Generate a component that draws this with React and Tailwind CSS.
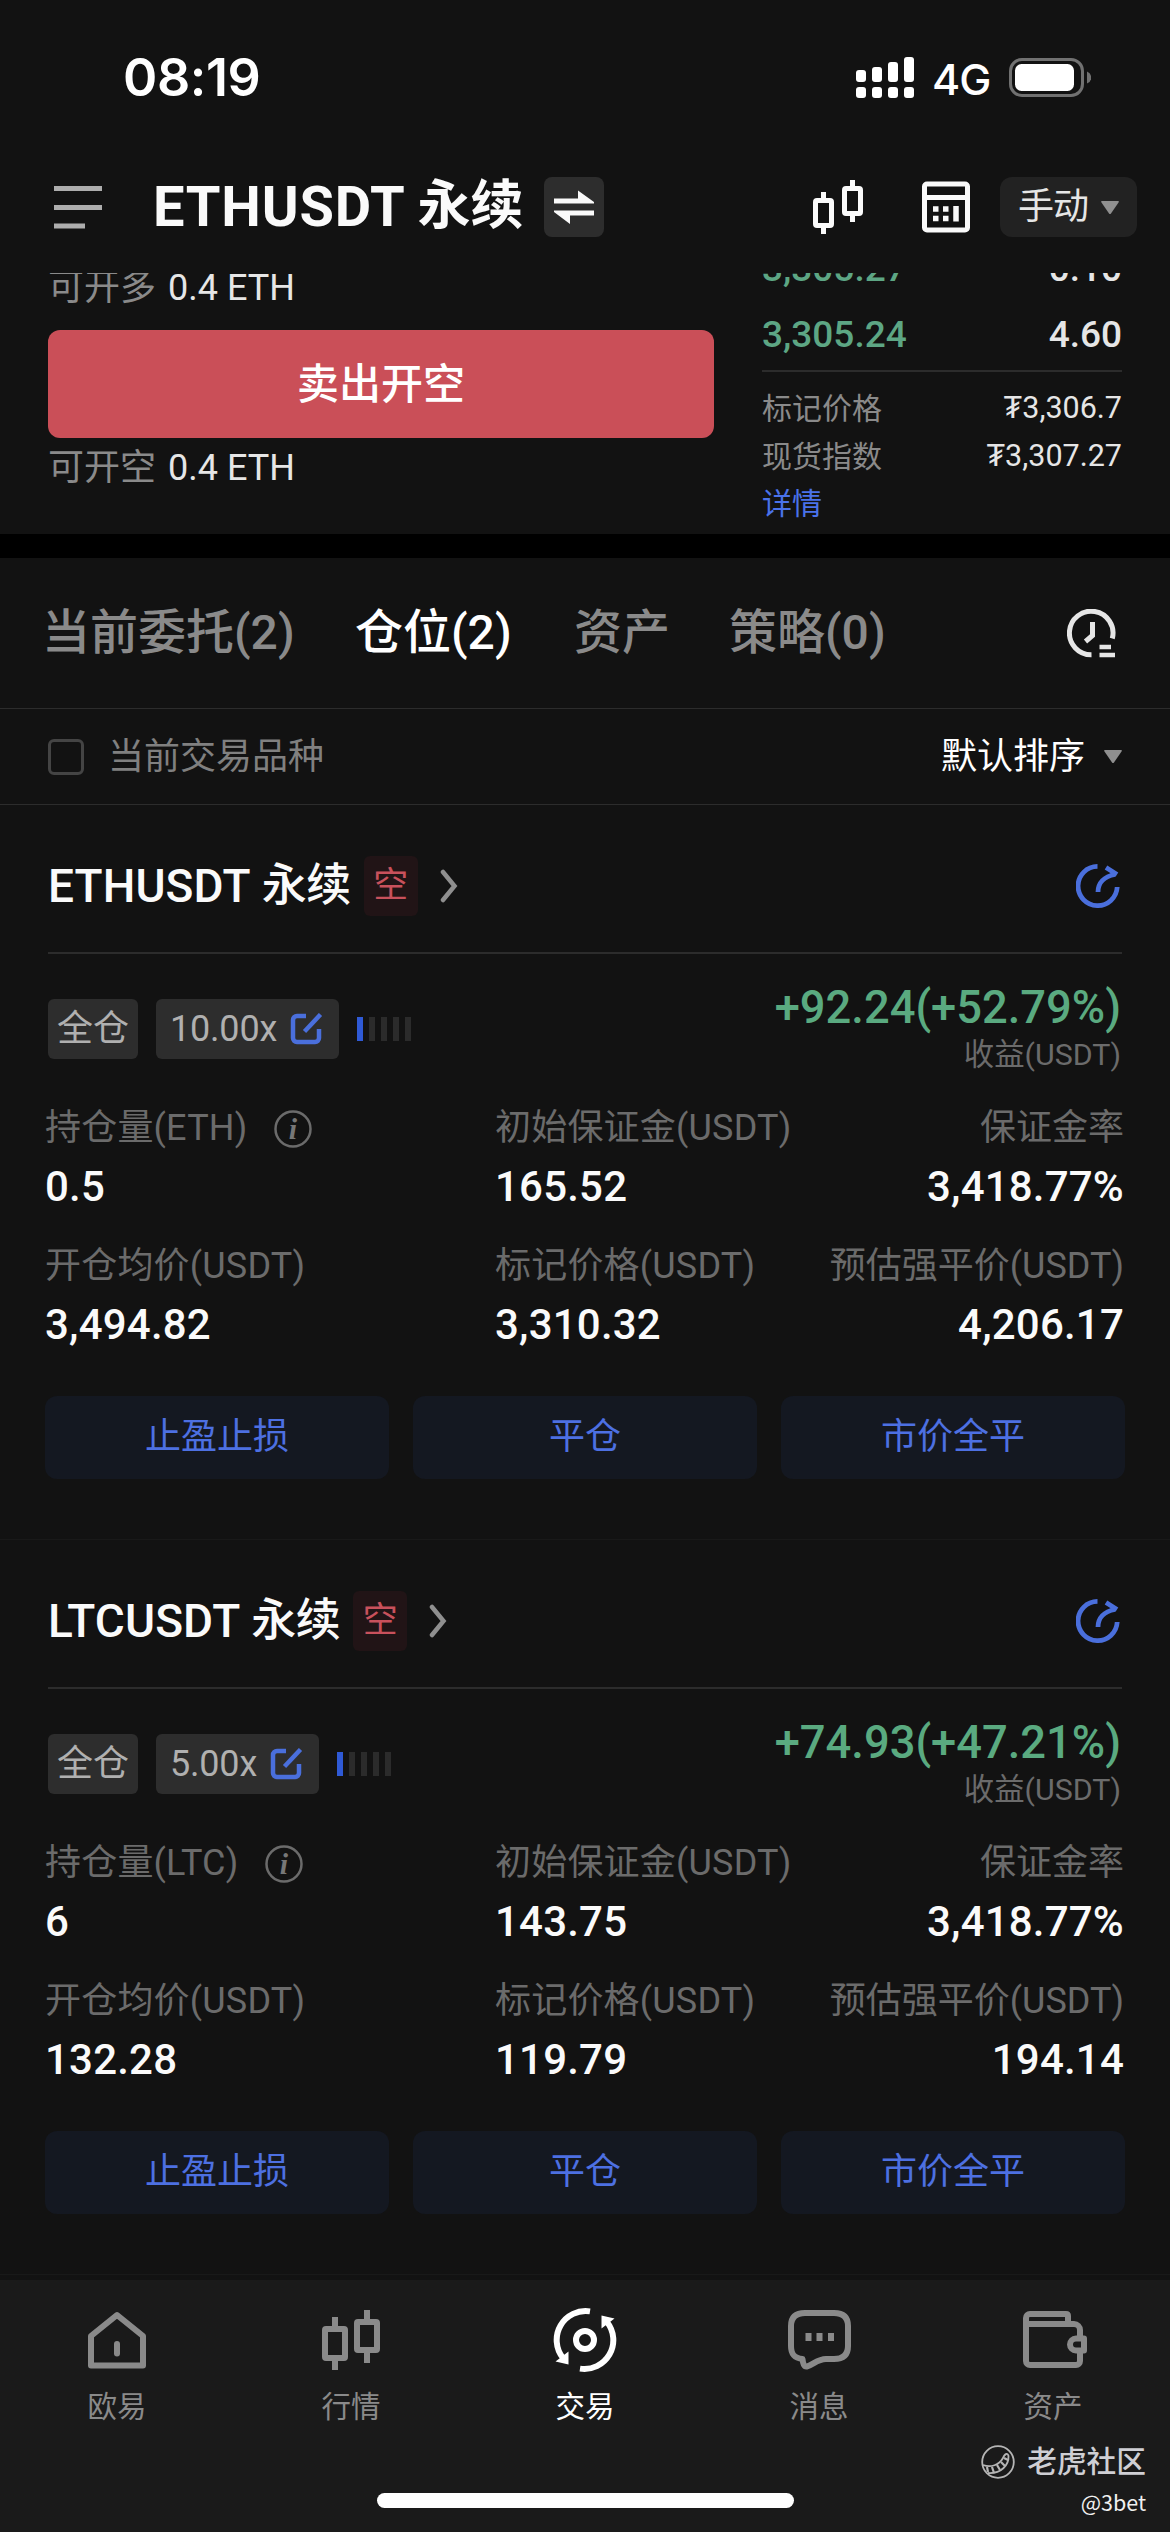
const positions = [
  {
    symbol: "ETHUSDT",
    coin: "ETH",
    leverage: "10.00x",
    pnl: "+92.24(+52.79%)",
    size: "0.5",
    margin: "165.52",
    marginRate: "3,418.77%",
    entry: "3,494.82",
    mark: "3,310.32",
    liq: "4,206.17",
  },
  {
    symbol: "LTCUSDT",
    coin: "LTC",
    leverage: "5.00x",
    pnl: "+74.93(+47.21%)",
    size: "6",
    margin: "143.75",
    marginRate: "3,418.77%",
    entry: "132.28",
    mark: "119.79",
    liq: "194.14",
  },
];

function StatusBar() {
  return (
    <div className="flex h-[156px] items-center justify-between pl-[123px] pr-[79px] font-[Inter,sans-serif] text-white">
      <span className="text-[52px] font-semibold tracking-[-0.4px]">08:19</span>
      <div className="flex items-center">
        <svg width="58" height="42" viewBox="0 0 58 42" fill="#fff">
          <rect x="0" y="13" width="10" height="12" rx="3" />
          <rect x="16" y="10" width="10" height="15" rx="3" />
          <rect x="32" y="5" width="10" height="20" rx="3" />
          <rect x="48" y="0" width="10" height="25" rx="3" />
          <rect x="0" y="30" width="10" height="11" rx="3" />
          <rect x="16" y="30" width="10" height="11" rx="3" />
          <rect x="32" y="30" width="10" height="11" rx="3" />
          <rect x="48" y="30" width="10" height="11" rx="3" />
        </svg>
        <span className="mt-[2px] ml-[18px] w-[60px] text-[43px] font-medium leading-[42px] tracking-[-1px]">4G</span>
        <svg className="ml-[17px]" width="82" height="40" viewBox="0 0 82 40" fill="none">
          <rect x="1.5" y="1.5" width="72" height="36" rx="11.5" stroke="#717171" strokeWidth="3" />
          <rect x="6" y="6" width="59" height="27" rx="6.5" fill="#fff" />
          <path d="M78 13.5q4.200 1.500 4.200 6t-4.200 6z" fill="#717171" />
        </svg>
      </div>
    </div>
  );
}

function Triangle() {
  return (
    <svg width="18" height="13" viewBox="0 0 18 13" fill="#8f8f8f">
      <path d="M1 0h16q1.500 0 .5 1.500L10 12.400q-1 1-2 0L.5 1.500Q-.5 0 1 0z" />
    </svg>
  );
}

function Header() {
  return (
    <div className="flex h-[117px] items-center pb-[15px] pl-[54px] pr-[33px]">
      <svg width="48" height="43" viewBox="0 0 48 43" fill="#adadad">
        <rect width="48" height="5" />
        <rect y="19" width="48" height="5" />
        <rect y="37.500" width="31" height="5" />
      </svg>
      <h1 className="ml-[51px] flex w-[372px] items-center whitespace-nowrap font-bold text-[#fafafa]">
        <span className="text-[56px] tracking-[0.8px]">ETHUSDT</span>
        <span className="ml-[12px] text-[53px]">永续</span>
      </h1>
      <div className="ml-[19px] h-[60px] w-[60px] rounded-lg bg-[#2d2d2d]">
        <svg width="60" height="60" viewBox="0 0 60 60" fill="#fafafa">
          <path d="M10 21.500H34V13.500L50 25V26.500H10zM50 33.500H10V35L26 47V38.500H50z" />
        </svg>
      </div>
      <div className="ml-auto flex items-center">
        <svg width="50" height="54" viewBox="0 0 50 54" fill="none" stroke="#fafafa" strokeWidth="5">
          <rect x="2.500" y="20.500" width="16" height="25" rx="1.500" />
          <path d="M10.500 12v8M10.500 46v8M39.500 0v8M39.500 34v8" />
          <rect x="31.500" y="8.500" width="16" height="25" rx="1.500" />
        </svg>
        <svg className="ml-[59px]" width="48" height="52" viewBox="0 0 48 52" fill="none" stroke="#fafafa" strokeWidth="5">
          <rect x="2.500" y="3" width="43" height="46" rx="2.500" />
          <path d="M2 16.500h44" />
          <path d="M11 28h5.500M21 28h5.500M11 37.500h5.500M21 37.500h5.500M34 25v15.500" strokeWidth="5.500" />
        </svg>
        <div className="ml-[30px] flex h-[60px] w-[137px] items-center justify-between rounded-xl bg-[#222] pl-[18px] pr-[18px] text-[36px] tracking-[-1px] text-[#e6e6e6]">
          <span>手动</span>
          <Triangle />
        </div>
      </div>
    </div>
  );
}

function OrderPanel() {
  return (
    <div className="flex h-[261px] justify-between overflow-hidden pl-12 pr-12">
      <div className="w-[666px] text-[36px] text-[#e6e6e6]">
        <div className="h-[57px] leading-[30px]">
          <span className="mr-[12px] text-[#8a8a8a]">可开多</span>
          <span>0.4 ETH</span>
        </div>
        <button className="flex h-[108px] w-full items-center justify-center rounded-xl bg-[#ca4f58] text-[42px] font-medium text-white">
          卖出开空
        </button>
        <div className="leading-[60px]">
          <span className="mr-[12px] text-[#8a8a8a]">可开空</span>
          <span>0.4 ETH</span>
        </div>
      </div>
      <div className="-mt-[37px] w-[360px]">
        <div className="flex h-[66px] items-center justify-between text-[37px] font-medium text-[#e6e6e6]">
          <span className="text-[#5da684]">3,305.27</span>
          <span>0.10</span>
        </div>
        <div className="flex h-[66px] items-center justify-between text-[37px] font-medium text-[#e6e6e6]">
          <span className="text-[#5da684]">3,305.24</span>
          <span>4.60</span>
        </div>
        <div className="mt-[2px] mb-[12px] h-[2px] bg-[#2c2c2c]" />
        <div className="flex h-[48px] items-center justify-between text-[30.5px] text-[#e6e6e6]">
          <span className="text-[30px] text-[#8a8a8a]">标记价格</span>
          <span>₮3,306.7</span>
        </div>
        <div className="flex h-[48px] items-center justify-between text-[30.5px] text-[#e6e6e6]">
          <span className="text-[30px] text-[#8a8a8a]">现货指数</span>
          <span>₮3,307.27</span>
        </div>
        <div className="text-[30px] leading-[48px] text-[#4a72ea]">详情</div>
      </div>
    </div>
  );
}

function Tabs() {
  return (
    <div className="flex h-[151px] items-center border-b border-[#2c2c2c] pl-[42px] pr-[54px] text-[48px] font-medium text-[#8a8a8a]">
      <span className="w-[313px]">当前委托(2)</span>
      <span className="w-[219px] text-white">仓位(2)</span>
      <span className="w-[155px]">资产</span>
      <span>策略(0)</span>
      <svg className="ml-auto" width="49" height="49" viewBox="0 0 49 49" fill="none" stroke="#e6e6e6" strokeWidth="5">
        <path d="M45.300 29.500A21.800 21.800 0 1 0 24.500 45.800" />
        <path d="M25.500 13v13.500l-7 6" />
        <path d="M32.500 38h11.500M32.500 46h15.500" strokeWidth="4.500" />
      </svg>
    </div>
  );
}

function FilterRow() {
  return (
    <div className="flex h-24 items-center border-b border-[#2c2c2c] px-12 text-[36px]">
      <span className="h-9 w-9 rounded-md border-[3.5px] border-[#444]" />
      <span className="ml-[24px] text-[36px] text-[#808080]">当前交易品种</span>
      <span className="mr-[19px] ml-auto text-white">默认排序</span>
      <Triangle />
    </div>
  );
}

function EditIcon() {
  return (
    <svg width="33" height="32" viewBox="0 0 33 32" fill="none" stroke="#4a6fdc" strokeWidth="4.500">
      <path d="M16 3H7a4 4 0 0 0-4 4v18a4 4 0 0 0 4 4h18a4 4 0 0 0 4-4v-9" />
      <path d="M14.500 18.500L30.500 1.500" />
    </svg>
  );
}

function ShareIcon() {
  return (
    <svg width="44" height="44" viewBox="0 0 44 44" fill="none" stroke="#4a6fdc" strokeWidth="4.800">
      <path d="M21.500 2.400A19.600 19.600 0 1 0 41.200 23" />
      <path d="M22 28c0-9 6-15.500 17-17.500M30 3.500l11 7" />
    </svg>
  );
}

function Cell({ label, value, right, children }) {
  return (
    <div className={right ? "text-right" : ""}>
      <div className={right ? "flex h-[54px] items-center justify-end text-[36px] text-[#6b6b6b]" : "flex h-[54px] items-center text-[36px] tracking-[0.2px] text-[#6b6b6b]"}>
        {label}
        {children}
      </div>
      <div className="text-[42px] leading-[64px] font-medium tracking-[0.2px] text-[#fafafa]">{value}</div>
    </div>
  );
}

function PositionCard({ p }) {
  return (
    <div className="h-[735px] border-b border-[#191919]">
      <div className="mx-12 flex h-[149px] items-center border-b-2 border-[#2c2c2c] pt-[15px] pr-[2px]">
        <span className="text-[46px] font-medium tracking-[0.1px] text-[#fafafa]">{p.symbol}</span>
        <span className="ml-[11px] text-[45px] font-medium tracking-[-0.5px] text-[#fafafa]">永续</span>
        <span className="ml-[13px] flex h-[60px] w-[54px] items-center justify-center rounded-md bg-[#211416] text-[35px] text-[#c8515c]">空</span>
        <svg className="ml-[22px]" width="18" height="34" viewBox="0 0 18 34" fill="none" stroke="#8f8f8f" strokeWidth="4.500" strokeLinecap="round">
          <path d="M3 3l11.500 14L3 31" />
        </svg>
        <span className="ml-auto">
          <ShareIcon />
        </span>
      </div>

      <div className="mx-12 mt-[27px] flex h-[94px] justify-between">
        <div className="mt-[18px] flex h-[60px] items-center text-[36px] text-[#b0b0b0]">
          <span className="flex h-full w-[90px] items-center justify-center rounded-md bg-[#2d2d2d]">全仓</span>
          <span className="ml-[18px] flex h-full items-center rounded-md bg-[#2d2d2d] pl-[14px] pr-4 tracking-[-0.2px]">
            <span className="mr-[13px]">{p.leverage}</span>
            <EditIcon />
          </span>
          <span className="ml-[18px] flex gap-[6px]">
            <i className="h-6 w-[6px] bg-[#2f5ad6]" />
            <i className="h-6 w-[6px] bg-[#2b2b2b]" />
            <i className="h-6 w-[6px] bg-[#2b2b2b]" />
            <i className="h-6 w-[6px] bg-[#2b2b2b]" />
            <i className="h-6 w-[6px] bg-[#2b2b2b]" />
          </span>
        </div>
        <div className="pr-px text-right">
          <div className="text-[45.3px] leading-[54px] font-medium text-[#5aaa80]">{p.pnl}</div>
          <div className="text-[30.4px] leading-[40px] text-[#6b6b6b]">收益(USDT)</div>
        </div>
      </div>

      <div className="mt-[26px] grid grid-cols-[450px_1fr_1fr] gap-y-5 pr-[46px] pl-[45px]">
        <Cell label={"持仓量(" + p.coin + ")"} value={p.size}>
          <svg className="mt-[2px] ml-[27px]" width="38" height="38" viewBox="0 0 38 38">
            <circle cx="19" cy="19" r="17.500" fill="none" stroke="#6b6b6b" strokeWidth="2.500" />
            <text x="19" y="29" textAnchor="middle" fill="#777" fontFamily="Liberation Serif, serif" fontStyle="italic" fontWeight="700" fontSize="30">i</text>
          </svg>
        </Cell>
        <Cell label="初始保证金(USDT)" value={p.margin} />
        <Cell label="保证金率" value={p.marginRate} right />
        <Cell label="开仓均价(USDT)" value={p.entry} />
        <Cell label="标记价格(USDT)" value={p.mark} />
        <Cell label="预估强平价(USDT)" value={p.liq} right />
      </div>

      <div className="mt-[39px] grid grid-cols-3 gap-6 px-[45px] text-[36px] text-[#4d70e2]">
        <button className="h-[83px] rounded-xl bg-[#141821] pb-[2px]">止盈止损</button>
        <button className="h-[83px] rounded-xl bg-[#141821] pb-[2px]">平仓</button>
        <button className="h-[83px] rounded-xl bg-[#141821] pb-[2px]">市价全平</button>
      </div>
    </div>
  );
}

function NavItem({ label, active, children }) {
  return (
    <div className={active ? "flex flex-col items-center text-white" : "flex flex-col items-center text-[#8a8a8a]"}>
      <div className="flex h-16 items-center">{children}</div>
      <span className="mt-[15px] text-[29.5px] leading-[40px]">{label}</span>
    </div>
  );
}

function BottomNav() {
  return (
    <div className="relative mt-[5px] h-[252px] bg-[#1a1a1a] pt-[28px]">
      <div className="grid grid-cols-5">
        <NavItem label="欧易">
          <svg width="58" height="58" viewBox="0 0 58 58" fill="none" stroke="currentColor" strokeWidth="6" strokeLinejoin="round">
            <path d="M29 4L3 25v29.500h52V25z" />
            <path d="M29 33v9.500" strokeLinecap="round" />
          </svg>
        </NavItem>
        <NavItem label="行情">
          <svg width="58" height="60" viewBox="0 0 58 60" fill="none" stroke="currentColor" strokeWidth="6">
            <rect x="3" y="19" width="20" height="29" rx="1" />
            <path d="M13 7v10M13 50v10M45 0v10M45 42v11" />
            <rect x="35" y="12" width="20" height="28" rx="1" />
          </svg>
        </NavItem>
        <NavItem label="交易" active>
          <svg width="64" height="64" viewBox="0 0 64 64" fill="none" stroke="currentColor" strokeWidth="6">
            <circle cx="32" cy="32" r="9" />
            <path d="M37 3.400A28.900 28.900 0 0 0 10 50M27 60.600A28.900 28.900 0 0 0 54 14" />
            <path d="M2.500 53.500l13 3V43.500zM61.500 10.500l-13-3V20.500z" fill="currentColor" stroke="none" />
          </svg>
        </NavItem>
        <NavItem label="消息">
          <svg width="63" height="60" viewBox="0 0 63 60" fill="none" stroke="currentColor" strokeWidth="6" strokeLinejoin="round">
            <path d="M17 3h29q14 0 14 13v20q0 13-14 13h-8c-8 0-12 5-19 7.500-3 .5-4-3-4.500-7.500C6 48 3 44 3 36V16Q3 3 17 3z" />
            <path d="M17.500 27h6M28.500 27h6M40 27h6" strokeWidth="8" strokeLinejoin="miter" />
          </svg>
        </NavItem>
        <NavItem label="资产">
          <svg className="ml-1" width="64" height="58" viewBox="0 0 64 58" fill="none" stroke="currentColor" strokeWidth="6" strokeLinejoin="round">
            <path d="M45 13V5q0-2-2-2H7a4 4 0 0 0-4 4v43a4 4 0 0 0 4 4h46a4 4 0 0 0 4-4V40M57 27v-8a6 6 0 0 0-6-6H3" />
            <path d="M61 27.500h-8a6 6 0 0 0 0 12h8z" />
          </svg>
        </NavItem>
      </div>
      <div className="mx-auto mt-[66px] h-[15px] w-[417px] rounded-full bg-white" />

      {/* community watermark */}
      <div className="absolute top-[162px] right-[24px] flex flex-col items-end">
        <div className="flex h-[40px] items-center text-[29.7px] font-medium text-[#cfcfd4]">
          <svg className="mr-[12px]" width="34" height="34" viewBox="0 0 34 34" fill="none" stroke="#b5b5b5" strokeWidth="1.800">
            <circle cx="17" cy="17" r="15.800" />
            <path d="M2 20c8 3 16 0 20-7 2-5 5-5 5.500-2C28 20 20 29 7 28" />
            <path d="M6 22l1 5M11 22l2 6M16 20l3 5M20 17l4 4M23 13l4 2" strokeWidth="2.200" />
          </svg>
          老虎社区
        </div>
        <span className="font-['Noto_Sans_CJK_SC',sans-serif] text-[21.5px] leading-[40px] text-[#f0f0f0]">@3bet</span>
      </div>
    </div>
  );
}

export default function App() {
  return (
    <div className="h-[2532px] w-[1170px] overflow-hidden bg-[#121212] font-[Roboto,'Noto_Sans_CJK_SC',sans-serif]">
      <StatusBar />
      <Header />
      <OrderPanel />
      <div className="h-6 bg-black" />
      <Tabs />
      <FilterRow />
      {positions.map((p) => (
        <PositionCard key={p.symbol} p={p} />
      ))}
      <BottomNav />
    </div>
  );
}
